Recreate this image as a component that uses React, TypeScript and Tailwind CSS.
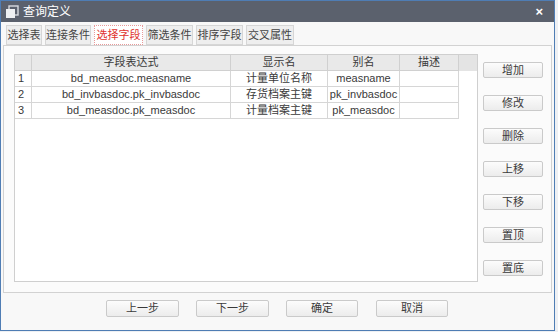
import React from "react";

const tabs = [
  { t: "选择表", w: "w-[36px]" },
  { t: "连接条件", w: "w-[46px]" },
  { t: "选择字段", w: "w-[49px]" },
  { t: "筛选条件", w: "w-[47px]" },
  { t: "排序字段", w: "w-[47px]" },
  { t: "交叉属性", w: "w-[48px]" },
];

const rows = [
  { expr: "bd_measdoc.measname", name: "计量单位名称", alias: "measname" },
  { expr: "bd_invbasdoc.pk_invbasdoc", name: "存货档案主键", alias: "pk_invbasdoc" },
  { expr: "bd_measdoc.pk_measdoc", name: "计量档案主键", alias: "pk_measdoc" },
];

const sideButtons = ["增加", "修改", "删除", "上移", "下移", "置顶", "置底"];

function Btn({ label, className }: { label: string; className: string }) {
  return (
    <div
      className={`flex items-center justify-center border border-[#cacaca] rounded-[2px] bg-gradient-to-b from-[#fcfcfc] to-[#ececec] text-[11px] text-[#3a3a3a] ${className}`}
    >
      {label}
    </div>
  );
}

export default function App() {
  return (
    <div
      className="w-[558px] h-[332px] bg-[#eef0f3] overflow-hidden"
      style={{ fontFamily: '"Liberation Sans", "Noto Sans CJK SC", sans-serif' }}
    >
      <div className="w-[555px] h-[331px] border border-[#4f7db4] bg-[#f8f8f8] flex flex-col">
        {/* title bar */}
        <div className="h-[21px] bg-[#5b616d] flex items-center pl-[4px] pr-[11px] shrink-0">
          <svg width="14" height="14" viewBox="0 0 14 14" className="mr-[4px]">
            <rect x="4" y="1" width="9" height="9" fill="none" stroke="#d8dbe0" strokeWidth="1.4" />
            <rect x="1" y="4" width="9" height="9" fill="#eef0f2" />
          </svg>
          <span className="text-[12px] text-white leading-none">查询定义</span>
          <span className="ml-auto text-white text-[13px] font-bold leading-none">×</span>
        </div>

        {/* tabs */}
        <div className="flex gap-[3px] pl-[5px] pt-[3px] h-[23px] shrink-0">
          {tabs.map((tab, i) => (
            <div
              key={tab.t}
              className={
                i === 2
                  ? `${tab.w} h-[20px] flex items-center justify-center text-[11px] text-[#e0322e] bg-white border border-dotted border-[#e89a9a]`
                  : `${tab.w} h-[20px] flex items-center justify-center text-[11px] text-[#444] bg-[#eeeeee] border border-[#d6d6d6]`
              }
            >
              {tab.t}
            </div>
          ))}
        </div>

        {/* panel */}
        <div className="mx-[2px] h-[248px] border border-[#d2d2d2] bg-[#fbfbfb] flex pt-[8px] pl-[10px] shrink-0">
          <div className="w-[464px] h-[228px] border border-[#cfcfcf] bg-white">
            <div className="flex h-[16px] bg-[#e9e9e9] text-[11px] text-[#3a3a3a] leading-[15px]">
              <div className="w-[17px] border-r border-b border-[#d0d0d0]" />
              <div className="w-[199px] border-r border-b border-[#d0d0d0] text-center">字段表达式</div>
              <div className="w-[97px] border-r border-b border-[#d0d0d0] text-center">显示名</div>
              <div className="w-[72px] border-r border-b border-[#d0d0d0] text-center">别名</div>
              <div className="w-[59px] border-r border-b border-[#d0d0d0] text-center">描述</div>
              <div className="flex-1 bg-[#e4e4e4]" />
            </div>
            {rows.map((r, i) => (
              <div key={r.expr} className="flex h-[16px] text-[11px] text-[#3a3a3a] leading-[15px]">
                <div className="w-[17px] border-r border-b border-[#d6d6d6] pl-[3px]">{i + 1}</div>
                <div className="w-[199px] border-r border-b border-[#d6d6d6] text-center">{r.expr}</div>
                <div className="w-[97px] border-r border-b border-[#d6d6d6] text-center">{r.name}</div>
                <div className="w-[72px] border-r border-b border-[#d6d6d6] text-center">{r.alias}</div>
                <div className="w-[59px] border-r border-b border-[#d6d6d6]" />
              </div>
            ))}
          </div>
          <div className="flex flex-col gap-[17px] pl-[5px] pt-[8px]">
            {sideButtons.map((b) => (
              <Btn key={b} label={b} className="w-[60px] h-[16px]" />
            ))}
          </div>
        </div>

        {/* bottom buttons */}
        <div className="flex pt-[7px] pl-[105px]">
          <Btn label="上一步" className="w-[73px] h-[17px]" />
          <Btn label="下一步" className="w-[73px] h-[17px] ml-[17px]" />
          <Btn label="确定" className="w-[72px] h-[17px] ml-[17px]" />
          <Btn label="取消" className="w-[72px] h-[17px] ml-[18px]" />
        </div>
      </div>
    </div>
  );
}
